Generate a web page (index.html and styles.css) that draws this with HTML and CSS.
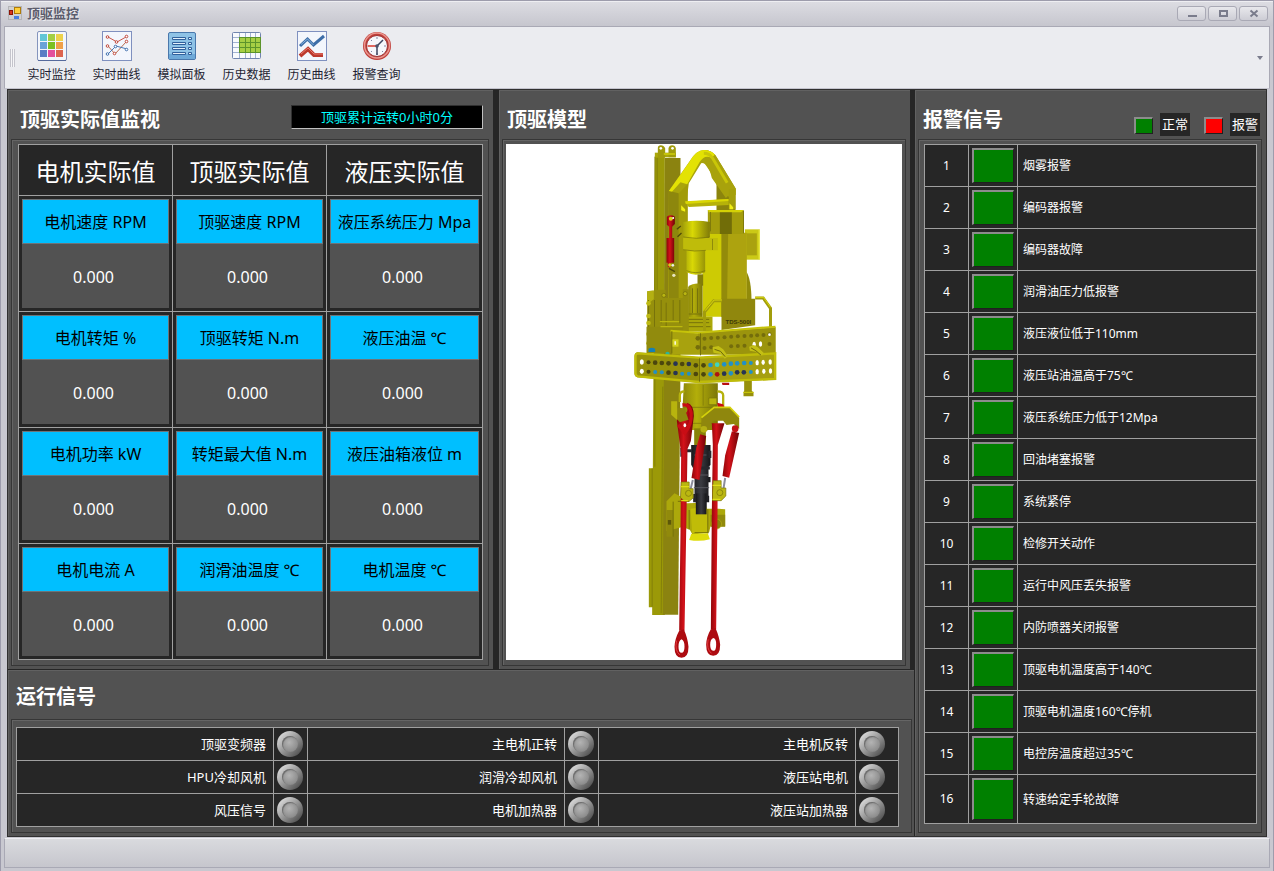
FILE: index.html
```
<!DOCTYPE html>
<html lang="zh-CN">
<head>
    <meta charset="UTF-8">
    <meta name="viewport" content="width=device-width, initial-scale=1.0">
    <title>顶驱监控</title>
    <link rel="stylesheet" href="styles.css">
</head>
<body>
    <header class="titlebar">
        <svg class="app-icon" width="14" height="14" viewBox="0 0 14 14">
            <rect x="0.5" y="0.5" width="13" height="13" fill="#d0d0d2" stroke="#b4b4b8"/>
            <rect x="6.5" y="1.5" width="6" height="6" fill="#ffcf3a" stroke="#b07c08"/>
            <rect x="1.5" y="4.5" width="3" height="4" fill="#d8361c" stroke="#8c1508"/>
            <rect x="6" y="10" width="5" height="3" fill="#4a7fe0"/>
        </svg>
        <h1>顶驱监控</h1>
        <div class="window-buttons">
            <button aria-label="最小化"><svg width="12" height="9"><path d="M2 7h9" stroke="#7a7c8c" stroke-width="2"/></svg></button>
            <button aria-label="最大化"><svg width="12" height="9"><rect x="3" y="2" width="7" height="5" fill="none" stroke="#7a7c8c" stroke-width="2"/></svg></button>
            <button aria-label="关闭"><svg width="12" height="9"><path d="M2.500 1.500l7 6M9.500 1.500l-7 6" stroke="#7a7c8c" stroke-width="2"/></svg></button>
        </div>
    </header>

    <nav class="toolbar">
        <span class="grip"></span>
        <button class="tool">
            <svg width="30" height="30" viewBox="0 0 30 30">
                <rect x="0.500" y="0.500" width="29" height="29" rx="1.500" fill="#f3f6fb" stroke="#8494bd"/>
                <path d="M1 29.500h28" stroke="#566a9c"/>
                <rect x="3" y="3" width="7" height="7" fill="#62c6d6"/><rect x="11" y="3" width="7" height="7" fill="#a3cf45"/><rect x="19" y="3" width="7" height="7" fill="#ecd24c"/>
                <rect x="3" y="11" width="7" height="7" fill="#6aa3d8"/><rect x="11" y="11" width="7" height="7" fill="#7cc021"/><rect x="19" y="11" width="7" height="7" fill="#efa04a"/>
                <rect x="3" y="19" width="7" height="7" fill="#5a7cc4"/><rect x="11" y="19" width="7" height="7" fill="#e3509d"/><rect x="19" y="19" width="7" height="7" fill="#dd6450"/>
            </svg>
            <span>实时监控</span>
        </button>
        <button class="tool">
            <svg width="30" height="30" viewBox="0 0 30 30">
                <rect x="0.500" y="0.500" width="29" height="29" fill="#f3f6fc" stroke="#7f90bf"/>
                <path d="M6 6l9 5 9-5" stroke="#c9564a" fill="none"/>
                <path d="M6 15l7 8 11-12" stroke="#b86b4d" fill="none"/>
                <path d="M6 23l8-8 11 3" stroke="#4a78b4" fill="none"/>
                <g fill="#fff" stroke="#c0483c"><circle cx="5.500" cy="6" r="1.300"/><circle cx="14.500" cy="11" r="1.300"/><circle cx="24.500" cy="5.500" r="1.300"/><circle cx="24.500" cy="10.500" r="1.300"/><circle cx="5.500" cy="15" r="1.300"/><circle cx="12.500" cy="22.500" r="1.300"/></g>
                <g fill="#fff" stroke="#3f6fae"><circle cx="5.500" cy="23" r="1.300"/><circle cx="13.500" cy="15.500" r="1.300"/><circle cx="24.500" cy="18.500" r="1.300"/></g>
            </svg>
            <span>实时曲线</span>
        </button>
        <button class="tool">
            <svg width="30" height="30" viewBox="0 0 30 30">
                <rect x="1.500" y="1.500" width="27" height="27" rx="1.500" fill="#8fc3e6" stroke="#4a78ac"/>
                <path d="M2 23h26v5h-26z" fill="#6ea9d8"/>
                <g fill="#e4f1fb" stroke="#31619c"><path d="M5.500 6.500h13v2h-13zM5.500 11.500h13v2h-13zM5.500 16.500h13v2h-13zM5.500 21.500h13v2h-13z"/><path d="M21.500 6.500h3v2h-3zM21.500 11.500h3v2h-3zM21.500 16.500h3v2h-3zM21.500 21.500h3v2h-3z"/></g>
            </svg>
            <span>模拟面板</span>
        </button>
        <button class="tool">
            <svg width="30" height="30" viewBox="0 0 30 30">
                <rect x="0.500" y="1.500" width="28" height="26" rx="1" fill="#f8fafd" stroke="#7185ae"/>
                <path d="M7 6h22v16h-22z" fill="#a6cf44"/>
                <path d="M1 6.500h28M1 11.500h6M1 16.500h6M1 21.500h6M7.500 2v25M13.500 2v4M18.500 2v4M23.500 2v4M13.500 22v5M18.500 22v5M23.500 22v5" stroke="#a2b3d2"/>
                <path d="M7 6.500h22M7 11.500h22M7 16.500h22M7 21.500h22M7.500 6v16M13.500 6v16M18.500 6v16M23.500 6v16M28.500 6v16" stroke="#5c942b"/>
            </svg>
            <span>历史数据</span>
        </button>
        <button class="tool">
            <svg width="30" height="30" viewBox="0 0 30 30">
                <rect x="0.500" y="0.500" width="29" height="29" fill="#f3f6fc" stroke="#7f90bf"/>
                <path d="M3 15l7.500-7 6 6L27 5" fill="none" stroke="#3d6da7" stroke-width="3"/>
                <path d="M4 13.500l6.500-5.500 6 6" fill="none" stroke="#85b4df"/>
                <path d="M3 25l8-7 6 6h9" fill="none" stroke="#bc392d" stroke-width="4"/>
                <path d="M4 23l7-6 6 6h9" fill="none" stroke="#e6796c"/>
            </svg>
            <span>历史曲线</span>
        </button>
        <button class="tool">
            <svg width="30" height="30" viewBox="0 0 30 30">
                <circle cx="15" cy="15" r="14" fill="#c03e39"/>
                <circle cx="15" cy="14.500" r="12.500" fill="none" stroke="#ea968f" stroke-width="1.500"/>
                <circle cx="15" cy="15" r="10.500" fill="#f6f7fb" stroke="#9c3434"/>
                <path d="M15 6v2M15 22v2M22 15h2M9 9l1 1M9 21l1-1M20 20l1 1" stroke="#8087a5"/>
                <path d="M15 15l6-6M15 15v9" stroke="#3e4660" stroke-width="1.500"/>
                <path d="M5.500 15H15" stroke="#d8382c" stroke-width="1.500"/>
                <circle cx="15" cy="15" r="1.800" fill="#4b536c"/>
            </svg>
            <span>报警查询</span>
        </button>
        <span class="more"></span>
    </nav>

    <main>
        <div class="left">
            <div class="top">
                <section class="panel metrics">
                    <div class="panel-head">
                        <h2>顶驱实际值监视</h2>
                        <output class="runtime">顶驱累计运转0小时0分</output>
                    </div>
                    <div class="box">
                        <table>
                            <thead>
                                <tr><th>电机实际值</th><th>顶驱实际值</th><th>液压实际值</th></tr>
                            </thead>
                            <tbody>
                                <tr>
                                    <td><div class="tile"><h3>电机速度 RPM</h3><p>0.000</p></div></td>
                                    <td><div class="tile"><h3>顶驱速度 RPM</h3><p>0.000</p></div></td>
                                    <td><div class="tile"><h3>液压系统压力 Mpa</h3><p>0.000</p></div></td>
                                </tr>
                                <tr>
                                    <td><div class="tile"><h3>电机转矩 %</h3><p>0.000</p></div></td>
                                    <td><div class="tile"><h3>顶驱转矩 N.m</h3><p>0.000</p></div></td>
                                    <td><div class="tile"><h3>液压油温 ℃</h3><p>0.000</p></div></td>
                                </tr>
                                <tr>
                                    <td><div class="tile"><h3>电机功率 kW</h3><p>0.000</p></div></td>
                                    <td><div class="tile"><h3>转矩最大值 N.m</h3><p>0.000</p></div></td>
                                    <td><div class="tile"><h3>液压油箱液位 m</h3><p>0.000</p></div></td>
                                </tr>
                                <tr>
                                    <td><div class="tile"><h3>电机电流 A</h3><p>0.000</p></div></td>
                                    <td><div class="tile"><h3>润滑油温度 ℃</h3><p>0.000</p></div></td>
                                    <td><div class="tile"><h3>电机温度 ℃</h3><p>0.000</p></div></td>
                                </tr>
                            </tbody>
                        </table>
                    </div>
                </section>

                <section class="panel model">
                    <div class="panel-head"><h2>顶驱模型</h2></div>
                    <div class="box">
                        <svg viewBox="-342 12 1185 1548">
                            <defs>
                                <linearGradient id="cyl"><stop offset="0" stop-color="#a5a30a"/><stop offset="0.350" stop-color="#d9d805"/><stop offset="1" stop-color="#807b08"/></linearGradient>
                                <linearGradient id="neck"><stop offset="0" stop-color="#8d8809"/><stop offset="0.400" stop-color="#b3ae0a"/><stop offset="1" stop-color="#7b7608"/></linearGradient>
                                <linearGradient id="rod"><stop offset="0" stop-color="#8d0508"/><stop offset="0.400" stop-color="#d3121a"/><stop offset="1" stop-color="#6f0306"/></linearGradient>
                                <linearGradient id="pipe"><stop offset="0" stop-color="#17171a"/><stop offset="0.500" stop-color="#3b3c42"/><stop offset="1" stop-color="#151518"/></linearGradient>
                            </defs>

                            <!-- guide rail -->
                            <path d="M103 50h30v1375H95V1402H85V985h12z" fill="#9b9908"/>
                            <path d="M133 54h47v620l-7 750h-46z" fill="#8b8310"/>
                            <path d="M103 50v930M110 54v560M127 740l-5 680M95 985v415" stroke="#77730b" stroke-width="2" fill="none"/>
                            <path d="M103 38h63v14h-63z" fill="#aaa80a"/>
                            <path d="M112 52V24q0-8 9-8t13 9v27zM144 52V25q2-9 11-9t11 9v27z" fill="#a09b0c"/>
                            <circle cx="121" cy="25" r="4" fill="#fff"/><circle cx="156" cy="25" r="4" fill="#fff"/>
                            <path d="M130 42h34" stroke="#d6d40b" stroke-width="4"/>

                            <!-- bail -->
                            <path d="M288 118l57 30v62h-57z" fill="#8b840d"/>
                            <path d="M145 153l63-90q20-33 43-33 26 0 39 24l56 92v18l-20 8-24-28-50-74q-5-7-10 0l-37 60-6 46v360h-56z" fill="#a9a40c"/>
                            <path d="M250 30q26 0 40 24l56 92-30 28-42-60q-12-50-34-44z" fill="#a8a20c"/>
                            <path d="M145 153l62-88q20-35 43-35 20 0 33 14l-10 10q-21-12-36 13l-37 66-20-6-29 32z" fill="#e3e204"/>
                            <path d="M250 40q16 0 26 14l44 74" fill="none" stroke="#c9c608" stroke-width="9"/>
                            <path d="M145 153l30 7v370h-30z" fill="#8d870d"/>
                            <path d="M175 160l27-28v398h-27z" fill="#a19b09"/>
                            <path d="M192 185l133-8v18l-120 6z" fill="#b6b209"/>
                            <path d="M194 184l130-7v6l-128 9z" fill="#d9d604"/>
                            <path d="M325 148h20v60h-20z" fill="#a49f0a"/>
                            <path d="M327 190l11 12v6h-11zM182 196l12 12v7l-12-4z" fill="#f1ef14"/>

                            <!-- motor housing -->
                            <path d="M373 268h45v91h-45z" fill="#cbc916"/>
                            <path d="M379 280h30v66h-30z" fill="#aaa20f"/>
                            <path d="M416 270v88" stroke="#efee43" stroke-width="3"/>
                            <path d="M378 395q15 25 15 90h-15z" fill="#928b0a"/>
                            <path d="M246 278h62v252h-62z" fill="#cdcb04"/>
                            <path d="M303 278h76v252h-76z" fill="#ada30f"/>
                            <path d="M303 280h20l-4 250h-16z" fill="#938b0a"/>
                            <path d="M262 210h107v72H270l-8-9z" fill="#a39c0c"/>
                            <path d="M262 210h107l-7 7h-97z" fill="#d4d105"/>
                            <path d="M298 217h36v65h-36z" fill="#716d08"/>
                            <path d="M270 216v58M369 212v68" stroke="#7f7a0b" stroke-width="3"/>

                            <!-- small motor -->
                            <path d="M188 246q40-7 80 0v45q-8 9-14 9v97q-28 14-56 0v-68l-10-8z" fill="url(#cyl)"/>
                            <path d="M188 292q38 7 68 2h36v37h-36q-38 7-68-2z" fill="#bfbc0a"/>
                            <path d="M188 291q40 8 80 0M188 329q34 7 68 2M198 392q28 12 56 0M276 297v33" stroke="#77730b" stroke-width="2" fill="none"/>
                            <path d="M231 403h17v34h-17z" fill="#827d0b"/>
                            <path d="M203 440q18-14 43-8v100h-43z" fill="url(#neck)"/>
                            <path d="M190 530h86v45h-86z" fill="#aba80a"/>
                            <path d="M190 522h55M198 538h68M202 548h64M216 445v74M231 445v74M190 560h80" stroke="#77730b" stroke-width="3"/>

                            <!-- red cylinder beside the rail -->
                            <path d="M139 230q12-8 24 0v22l-8 8v34h6v74h-10v14h-9v-14h-4v-74h8v-34l-7-6z" fill="url(#rod)"/>
                            <circle cx="151" cy="236" r="6" fill="#d5d118"/><circle cx="158" cy="234" r="3" fill="#fff"/><circle cx="148" cy="375" r="5" fill="#d5d118"/><circle cx="157" cy="376" r="4" fill="#eee"/><circle cx="160" cy="406" r="5" fill="#e7e4c0"/>
                            <path d="M169 268l12-10M171 290l12-11M145 385l18 10" stroke="#4e4a08" stroke-width="4"/>

                            <!-- rail brackets -->
                            <path d="M80 454h19l4-5h32v25h52v-26h18v140H80z" fill="#96900c"/>
                            <path d="M80 454l20-3v27l-20 15z" fill="#b4b012"/>
                            <circle cx="130" cy="466" r="6" fill="#b9b512" stroke="#706b09" stroke-width="2"/><circle cx="194" cy="461" r="6" fill="#b9b512" stroke="#706b09" stroke-width="2"/>
                            <path d="M84 480v90M102 480v96M122 480v70M137 488v90M158 480v60M178 480v70" stroke="#78730b" stroke-width="3"/>
                            <g fill="#bdb913"><circle cx="84" cy="490" r="7"/><circle cx="84" cy="528" r="7"/><circle cx="84" cy="549" r="7"/><circle cx="84" cy="582" r="7"/><circle cx="84" cy="610" r="7"/></g>
                            <path d="M78 560h110v80H78z" fill="#918b0d"/>
                            <path d="M118 545h58M120 560h66" stroke="#bcb80e" stroke-width="4"/>

                            <!-- hand rails and name plate -->
                            <path d="M303 476h101v80l-101 14z" fill="#90870d"/>
                            <path d="M252 572v-56l28-34h24M404 474h24l22 31v57" fill="none" stroke="#a29d0c" stroke-width="9"/>
                            <path d="M254 512l27-32h23M404 472h25l21 30" fill="none" stroke="#d9d70b" stroke-width="3"/>
                            <text x="315" y="553" class="plate">TDS-500I</text>

                            <!-- basket, upper band -->
                            <path d="M150 575l82 5 233-18v82H154z" fill="#a8a20e"/>
                            <path d="M232 580l233-18v80H238z" fill="#9b940d"/>
                            <path d="M150 572l82 6 233-18" fill="none" stroke="#c6c309" stroke-width="6"/>
                            <path d="M154 574v66M240 580v66" stroke="#747009" stroke-width="3"/>
                            <path d="M156 598h18v22h-18z" fill="#d2d01b"/><path d="M164 604v10" stroke="#fff" stroke-width="4"/>
                            <g fill="#746d0c"><circle cx="232" cy="595" r="7"/><circle cx="232" cy="622" r="7"/><circle cx="252" cy="596" r="6"/><circle cx="272" cy="594" r="6"/><circle cx="292" cy="593" r="6"/><circle cx="312" cy="592" r="6"/><circle cx="332" cy="590" r="6"/><circle cx="352" cy="589" r="6"/><circle cx="372" cy="588" r="6"/><circle cx="392" cy="587" r="6"/><circle cx="410" cy="586" r="6"/><circle cx="429" cy="585" r="6"/><circle cx="447" cy="583" r="6"/><circle cx="252" cy="624" r="6"/><circle cx="272" cy="622" r="6"/><circle cx="332" cy="619" r="6"/><circle cx="352" cy="618" r="6"/><circle cx="372" cy="617" r="6"/><circle cx="447" cy="612" r="6"/></g>
                            <g fill="#fff"><ellipse cx="401" cy="613" rx="5" ry="8"/><ellipse cx="420" cy="612" rx="5" ry="8"/><circle cx="447" cy="584" r="4"/></g>
                            <path d="M84 626q10-6 20 0v10H84z" fill="#1680b4"/><path d="M135 638q6-5 12 0v8h-12z" fill="#2bb59b"/>

                            <!-- basket, lower band -->
                            <path d="M50 637l185 15 229-13v80l-229 9-185-16q-8-2-8-10v-53q0-10 8-12z" fill="#98920b"/>
                            <path d="M235 652l229-13v80l-229 9z" fill="#a69f10"/>
                            <path d="M464 640l-229 13-183-13q-7 1-7 9v50q0 8 7 10l183 17 229-9z" fill="none" stroke="#bfbc09" stroke-width="7"/>
                            <path d="M237 655v70" stroke="#77720a" stroke-width="3"/>
                            <g fill="#fff"><ellipse cx="64" cy="666" rx="6" ry="8"/><ellipse cx="64" cy="694" rx="6" ry="8"/><ellipse cx="410" cy="668" rx="5" ry="8"/><ellipse cx="428" cy="667" rx="5" ry="8"/><ellipse cx="449" cy="666" rx="5" ry="8"/><ellipse cx="410" cy="695" rx="5" ry="8"/><ellipse cx="430" cy="694" rx="5" ry="8"/><ellipse cx="450" cy="693" rx="5" ry="8"/></g>
                            <g fill="#4b460e"><circle cx="84" cy="667" r="6"/><circle cx="104" cy="668" r="7"/><circle cx="124" cy="669" r="7"/><circle cx="144" cy="670" r="7"/><circle cx="185" cy="672" r="7"/><circle cx="226" cy="676" r="7"/><circle cx="249" cy="676" r="7"/><circle cx="84" cy="695" r="6"/><circle cx="144" cy="698" r="7"/><circle cx="226" cy="702" r="7"/><circle cx="249" cy="703" r="7"/></g>
                            <g fill="#273453"><circle cx="165" cy="671" r="7"/><circle cx="205" cy="672" r="7"/><circle cx="165" cy="699" r="7"/><circle cx="311" cy="701" r="7"/><circle cx="350" cy="697" r="7"/><circle cx="370" cy="697" r="7"/></g>
                            <g fill="#2290c6"><circle cx="104" cy="696" r="6"/><circle cx="124" cy="697" r="6"/><circle cx="185" cy="701" r="6"/><circle cx="205" cy="701" r="6"/><circle cx="270" cy="675" r="7"/><circle cx="311" cy="673" r="7"/><circle cx="331" cy="671" r="7"/><circle cx="350" cy="670" r="7"/><circle cx="371" cy="669" r="7"/><circle cx="391" cy="669" r="6"/><circle cx="270" cy="703" r="7"/><circle cx="331" cy="700" r="7"/><circle cx="391" cy="696" r="6"/></g>
                            <circle cx="290" cy="674" r="7" fill="#40d4bd"/><circle cx="290" cy="703" r="7" fill="#ad1411"/>
                            <path d="M276 622l18-4 14 10 14 20-9 8-12-14-22-4zM386 620l14-5 12 7 18 17-8 9-16-13-18-3z" fill="#c3bf15"/>
                            <path d="M282 628l18 6 14 16M392 624l14 8 16 14" stroke="#6d680c" stroke-width="3" fill="none"/>

                            <!-- swivel neck -->
                            <path d="M371 723h23v30l5 4v12h-30v-12l2-4z" fill="#979009"/><path d="M368 757h32" stroke="#d1ce0a" stroke-width="3"/>
                            <path d="M190 730h102v140h-92l-14-60z" fill="url(#neck)"/>
                            <path d="M178 786v-20q0-12 14-12M290 754q18 0 18 12v40" fill="none" stroke="#b5b10d" stroke-width="7"/>
                            <path d="M265 774h24v20h-24z" fill="#b9b50d" stroke="#77720a" stroke-width="2"/>
                            <path d="M190 802h102M196 850h84M248 735v62" stroke="#77720a" stroke-width="2"/>
                            <path d="M304 728h22v7h-20z" fill="#b80f12"/>
                            <path d="M221 865h35v52h-35z" fill="#88830a"/>

                            <!-- black pipe -->
                            <path d="M212 915h58v60l-6 6v30h6v16h-6v40h2v20h-8v36h-32v-36h-8v-25h4v-70l-10-18z" fill="url(#pipe)"/>
                            <path d="M180 932h34M184 924v26M268 932v22M218 984h50" stroke="#27282e" stroke-width="9"/>
                            <path d="M222 945h36M225 1005h38M220 1043h46" stroke="#56575e" stroke-width="3"/>

                            <!-- gripper -->
                            <path d="M138 1084l24-24 20 10 12 20h8l40-2v18h52l20 2v51h-44l-4 18-50 7-8-15-22-8-48 12z" fill="#aca80b"/>
                            <path d="M138 1110h20v80h-20zM270 1124h44v36h-44z" fill="#918a0c"/>
                            <path d="M210 1106l48-6 5 80h-48z" fill="#c0bc08"/>
                            <circle cx="288" cy="1152" r="15" fill="#88810c" stroke="#b6b112" stroke-width="2"/>
                            <path d="M142 1140h10v14h-10z" fill="#5c5709"/>
                            <path d="M158 1085v105M206 1110v58M262 1108v72M172 1084h34M222 1178h42" stroke="#77720a" stroke-width="3"/>
                            <path d="M206 1200l6-18 50-2 6 18q-30 8-62 2z" fill="#dedc0b"/>
                            <path d="M226 1060h32v63h-32z" fill="url(#pipe)"/>

                            <!-- elevator links -->
                            <path d="M200 788q20 5 20 40l-9 75-10 24-4 250-5 295h-16l4-295 2-235-13-100q4-12 21-16 18-16 6-28z" fill="url(#rod)"/>
                            <path d="M274 850h38l-20 65-1 200-4 353h-16l3-353 3-200z" fill="url(#rod)"/>
                            <path d="M186 795q22-4 26 25 2 34-19 59l-20-25" fill="none" stroke="#c90d15" stroke-width="10"/>
                            <ellipse cx="193" cy="856" rx="4" ry="6" fill="#fff"/>
                            <path d="M170 803l22 2 12 34-26 8-14-16z" fill="#8f880d"/>
                            <path d="M152 784h18v56l-18-16z" fill="#b8b40e"/>
                            <path d="M290 788l18 5 6 14h-20z" fill="#c90d15"/>
                            <path fill-rule="evenodd" d="M176 1472l14-4q12 28 14 52 0 33-21 33t-21-33q1-24 14-48zM183 1498q-9 4-9 22t9 18 9-18-9-22z" fill="#ad0b10"/>
                            <path fill-rule="evenodd" d="M271 1468l14-4q12 28 14 50 0 33-21 33t-21-33q1-24 14-46zM278 1494q-9 4-9 20t9 18 9-18-9-20z" fill="#ad0b10"/>
                            <path d="M168 1502q-6 30 10 43M263 1498q-6 30 10 42" fill="none" stroke="#e33a3f" stroke-width="3"/>

                            <!-- hanger and tilt cylinders -->
                            <path d="M243 833l38-31h47l28 31v34l-16-15-22 3-10-13h-32l-14 29-21 4z" fill="#8f870d"/>
                            <path d="M243 833l38-31h47l28 29" fill="none" stroke="#d4d10a" stroke-width="5"/>
                            <path d="M239 883l18 5-20 132-24-6 14-90z" fill="url(#rod)"/>
                            <path d="M334 874l22 5-30 134-20-5 8-62z" fill="url(#rod)"/>
                            <circle cx="250" cy="868" r="10" fill="#b5b013"/><circle cx="344" cy="866" r="10" fill="#c31217"/>
                            <path d="M217 1020l-9 36M314 1014l-6 38" stroke="#8c8d9b" stroke-width="6"/>
                            <g fill="#bbb711" stroke="#77720a" stroke-width="2">
                                <path d="M182 1026h24v20h12v28l-12 10h-14l-12-12zM278 1022h24v22h14v24l-14 14h-26v-24z"/>
                                <circle cx="204" cy="1060" r="9"/><circle cx="298" cy="1058" r="9"/>
                            </g>
                            <path d="M180 1040h26M182 1082h20M276 1036h26M276 1078h24" stroke="#e0dd18" stroke-width="4"/>
                        </svg>
                    </div>
                </section>
            </div>

            <section class="panel run">
                <div class="panel-head"><h2>运行信号</h2></div>
                <div class="box">
                    <table>
                        <tr>
                            <td>顶驱变频器</td><td class="led"><i></i></td>
                            <td>主电机正转</td><td class="led"><i></i></td>
                            <td>主电机反转</td><td class="led last"><i></i></td>
                        </tr>
                        <tr>
                            <td>HPU冷却风机</td><td class="led"><i></i></td>
                            <td>润滑冷却风机</td><td class="led"><i></i></td>
                            <td>液压站电机</td><td class="led"><i></i></td>
                        </tr>
                        <tr>
                            <td>风压信号</td><td class="led"><i></i></td>
                            <td>电机加热器</td><td class="led"><i></i></td>
                            <td>液压站加热器</td><td class="led"><i></i></td>
                        </tr>
                    </table>
                </div>
            </section>
        </div>

        <section class="panel alarms">
            <div class="panel-head">
                <h2>报警信号</h2>
                <div class="legend">
                    <i class="lamp"></i><span>正常</span>
                    <i class="lamp red"></i><span>报警</span>
                </div>
            </div>
            <div class="box">
                <table>
                    <tr><td>1</td><td><i class="lamp"></i></td><td>烟雾报警</td></tr>
                    <tr><td>2</td><td><i class="lamp"></i></td><td>编码器报警</td></tr>
                    <tr><td>3</td><td><i class="lamp"></i></td><td>编码器故障</td></tr>
                    <tr><td>4</td><td><i class="lamp"></i></td><td>润滑油压力低报警</td></tr>
                    <tr><td>5</td><td><i class="lamp"></i></td><td>液压液位低于110mm</td></tr>
                    <tr><td>6</td><td><i class="lamp"></i></td><td>液压站油温高于75℃</td></tr>
                    <tr><td>7</td><td><i class="lamp"></i></td><td>液压系统压力低于12Mpa</td></tr>
                    <tr><td>8</td><td><i class="lamp"></i></td><td>回油堵塞报警</td></tr>
                    <tr><td>9</td><td><i class="lamp"></i></td><td>系统紧停</td></tr>
                    <tr><td>10</td><td><i class="lamp"></i></td><td>检修开关动作</td></tr>
                    <tr><td>11</td><td><i class="lamp"></i></td><td>运行中风压丢失报警</td></tr>
                    <tr><td>12</td><td><i class="lamp"></i></td><td>内防喷器关闭报警</td></tr>
                    <tr><td>13</td><td><i class="lamp"></i></td><td>顶驱电机温度高于140℃</td></tr>
                    <tr><td>14</td><td><i class="lamp"></i></td><td>顶驱电机温度160℃停机</td></tr>
                    <tr><td>15</td><td><i class="lamp"></i></td><td>电控房温度超过35℃</td></tr>
                    <tr><td>16</td><td><i class="lamp"></i></td><td>转速给定手轮故障</td></tr>
                </table>
            </div>
        </section>
    </main>

    <footer class="statusbar"></footer>
</body>
</html>
```
FILE: styles.css
```
* {
    box-sizing: border-box;
}

body {
    margin: 0;
    min-height: 100vh;
    display: flex;
    flex-direction: column;
    padding: 0 3px 3px;
    border: 1px solid #9d9cac;
    background-color: #c8c8d0;
    font-family: "Noto Sans", "Noto Sans CJK SC", sans-serif;
    font-size: 12px;
    color: white;
}

h1, h2, h3, p {
    margin: 0;
}

button {
    font: inherit;
    padding: 0;
    border: none;
    background: none;
    cursor: pointer;
}

table {
    width: 100%;
    border-collapse: collapse;
    table-layout: fixed;
    background-color: #262626;
}

th, td {
    border: 1px solid #a0a0a0;
    padding: 0;
}

/* title bar */
.titlebar {
    display: flex;
    align-items: center;
    height: 25px;
    margin: 0 -3px;
    padding: 0 5px 2px 7px;
    border-top: 1px solid #eeeef2;
    background: linear-gradient(#dcdce2, #c6c6ce);
}

.titlebar h1 {
    flex: 1;
    margin-left: 5px;
    font-size: 13px;
    line-height: 20px;
    color: #5c5c6c;
    text-shadow: 1px 1px 0 #ececf0;
}

.window-buttons {
    display: flex;
    gap: 2px;
}

.window-buttons button {
    display: flex;
    align-items: center;
    justify-content: center;
    width: 29px;
    height: 15px;
    border: 1px solid #a9a9b5;
    border-radius: 3px;
    background: linear-gradient(#e8e8ec, #cdcdd5);
}

/* toolbar */
.toolbar {
    display: flex;
    align-items: center;
    height: 63px;
    padding: 0 6px 0 5px;
    border: 1px solid #a9a9b5;
    border-bottom: 1px solid #c4c4ce;
    background-color: #ebecf0;
}

.grip {
    width: 5px;
    height: 18px;
    margin-right: 4px;
    background: repeating-linear-gradient(90deg, #c4c4cc 0 1px, #f6f6f8 1px 2px);
}

.tool {
    display: flex;
    flex-direction: column;
    align-items: center;
    width: 65px;
    color: #1e1e32;
}

.tool span {
    margin-top: 5px;
    line-height: 18px;
}

.more {
    margin-left: auto;
    border: 3px solid transparent;
    border-top: 4px solid #7a7c8c;
    border-bottom: 0;
}

/* panels */
main {
    flex: 1;
    display: flex;
    margin: 0 3px;
    border: 1px solid #303030;
    background-color: #262626;
}

.left {
    flex: 1;
    min-width: 0;
    display: flex;
    flex-direction: column;
    gap: 1px;
}

.top {
    display: flex;
    gap: 6px;
    padding-right: 5px;
}

.panel {
    display: flex;
    flex-direction: column;
    padding: 0 4px 3px 3px;
    background-color: #525252;
    box-shadow: inset 1px 1px 0 #616161;
}

.panel-head {
    display: flex;
    align-items: center;
    justify-content: space-between;
    height: 49px;
    padding: 10px 5px 0;
}

h2 {
    font-size: 20px;
    line-height: 28px;
}

.box {
    flex: 1;
    padding: 4px 5px;
    border: 1px solid #363636;
    box-shadow: inset 1px 1px 0 #656565;
}

.metrics {
    width: 485px;
}

.metrics .panel-head {
    padding: 10px 6px 0 9px;
}

.runtime {
    width: 192px;
    height: 24px;
    margin-bottom: 6px;
    border: 1px solid #303030;
    border-right-color: #c0c0c0;
    border-bottom-color: #c0c0c0;
    background-color: black;
    color: cyan;
    font-size: 13px;
    line-height: 23px;
    text-align: center;
}

.metrics .box {
    padding: 4px 5px 5px 6px;
}

.metrics th {
    height: 51px;
    padding-top: 3px;
    font-size: 24px;
    font-weight: normal;
    line-height: 32px;
}

.metrics th:not(:last-child) {
    width: 154px;
}

.metrics td {
    height: 116px;
    padding: 3px;
}

.tile {
    height: 109px;
    background-color: #525252;
    text-align: center;
    font-size: 16px;
}

.tile h3 {
    height: 45px;
    border: 1px solid #6e7478;
    background-color: #00bfff;
    color: black;
    font-size: 16px;
    font-weight: normal;
    line-height: 44px;
    white-space: nowrap;
}

.tile p {
    padding-right: 4px;
    line-height: 66px;
}

.model {
    flex: 1;
}

.model .box {
    padding: 4px 3px;
}

.model svg {
    display: block;
    width: 100%;
    height: 516px;
    background-color: white;
}

.plate {
    font: bold 18px "Liberation Sans", sans-serif;
    fill: #3c3808;
}

/* run signals */
.run {
    flex: 1;
    margin-right: 1px;
    padding-right: 2px;
}

.run .panel-head {
    padding-top: 4px;
}

.run .box {
    padding: 7px 12px 4px 4px;
}

.run td {
    height: 33px;
    padding-right: 7px;
    font-size: 13px;
    line-height: 18px;
    text-align: right;
}

.run .led {
    width: 34px;
    padding: 0 3px;
}

.run .last {
    width: 43px;
}

.led i {
    display: block;
    width: 26px;
    height: 26px;
    border: 5px solid transparent;
    border-radius: 50%;
    background: radial-gradient(circle at 45% 40%, #b4b4b4, #7c7c7c) padding-box, linear-gradient(135deg, #eeeeee, #a0a0a0 45%, #3c3c3c) border-box;
    box-shadow: inset 1px 1px 1px #6a6a6a;
}

/* alarms */
.alarms {
    width: 351px;
}

.alarms .box {
    padding: 4px 4px 8px 5px;
}

.legend {
    display: flex;
    align-items: center;
    margin: 9px -3px 0 0;
}

.legend span {
    width: 30px;
    margin: 0 14px 0 7px;
    background-color: #262626;
    font-size: 13px;
    line-height: 23px;
    text-align: center;
}

.legend span:last-child {
    margin-right: 0;
}

.lamp {
    display: block;
    height: 35px;
    border: 1px solid #202020;
    border-top: 2px solid #8c8c8c;
    border-left: 2px solid #8c8c8c;
    background-color: green;
}

.lamp.red {
    background-color: red;
}

.legend .lamp {
    width: 19px;
    height: 17px;
    margin-top: 3px;
}

.alarms td {
    height: 42px;
    padding: 1px 5px 0;
    line-height: 18px;
}

.alarms td:first-child {
    width: 44px;
    padding: 0;
    text-align: center;
}

.alarms td:nth-child(2) {
    width: 49px;
    padding: 0 3px;
}

.alarms tr:last-child td {
    height: 49px;
}

.alarms tr:last-child .lamp {
    height: 42px;
}

.statusbar {
    height: 30px;
    margin-top: 1px;
    border: 1px solid #a9a9b5;
    border-top-color: #eeeef2;
    background: linear-gradient(#d9dade, #c6c6cd);
}
```
